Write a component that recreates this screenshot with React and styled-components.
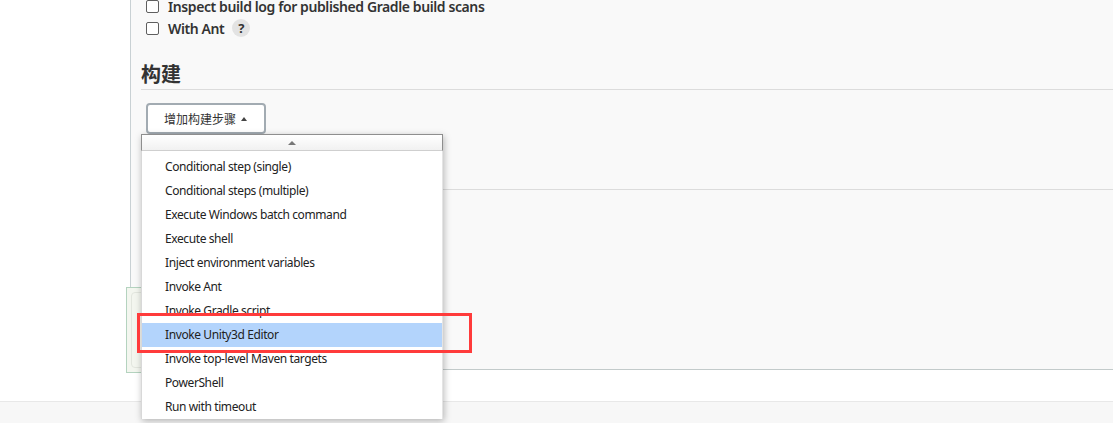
import React from "react";
import styled, { createGlobalStyle } from "styled-components";

const Global = createGlobalStyle`
  html, body { margin: 0; padding: 0; overflow: hidden; background: #fff; }
  body { font-family: "Noto Sans", "Noto Sans CJK SC", sans-serif; color: #333; }
  * { box-sizing: border-box; }
`;

const Page = styled.div`
  position: relative;
  width: 1113px;
  height: 423px;
  display: flex;
  flex-direction: column;
  overflow: hidden;
`;

const MainRow = styled.div`
  display: flex;
  height: 370px;
`;

const SideGap = styled.div`
  width: 130px;
  flex: none;
  background: #fff;
`;

const Panel = styled.div`
  flex: 1;
  display: flex;
  flex-direction: column;
  background: #f9f9f9;
  border-left: 1px solid #c9d1d4;
  border-bottom: 1px solid #c3cbcb;
`;

const FormArea = styled.div`
  flex: 1;
  padding-left: 10px;
`;

const CheckRow = styled.label`
  display: flex;
  align-items: center;
  height: 22px;
  padding-left: 5px;
  margin-top: ${(p) => (p.$first ? "-5px" : "0")};
  font-size: 14px;
  font-weight: 600;
  letter-spacing: -0.4px;
  color: #333;
  gap: 9px;
`;

const Box = styled.span`
  width: 13px;
  height: 13px;
  border: 1px solid #5f5f5f;
  border-radius: 2px;
  background: #fff;
  flex: none;
`;

const Help = styled.span`
  width: 18px;
  height: 18px;
  border-radius: 50%;
  background: #e3e3e3;
  color: #333;
  font-size: 13px;
  font-weight: 700;
  letter-spacing: 0;
  display: inline-flex;
  align-items: center;
  justify-content: center;
  margin-left: -1px;
`;

const Heading = styled.h2`
  margin: 20px 0 0;
  height: 31px;
  line-height: 32px;
  font-size: 20px;
  font-weight: 700;
  color: #333;
  border-bottom: 1px solid #dcdcdc;
`;

const ButtonWrap = styled.div`
  position: relative;
  margin: 13px 0 0 5px;
  width: 120px;
`;

const AddButton = styled.button`
  display: flex;
  align-items: center;
  gap: 5px;
  height: 31px;
  width: 120px;
  padding: 0 0 0 16px;
  border: 2px solid #a2abb2;
  border-radius: 4px;
  background: #fff;
  font-family: "Noto Sans CJK SC", sans-serif;
  font-size: 12px;
  color: #333;
`;

const Caret = styled.span`
  width: 0;
  height: 0;
  border-left: 3.5px solid transparent;
  border-right: 3.5px solid transparent;
  border-bottom: 4px solid #444;
`;

const Section = styled.div`
  margin-top: 55px;
  border-top: 1px solid #dcdcdc;
`;

const BottomBar = styled.div`
  height: 82px;
  flex: none;
`;

const SavedBox = styled.div`
  margin-left: -5px;
  width: 220px;
  height: 86px;
  border: 1px solid #b4d3bf;
  background: #f3f6ef;
  padding: 4px;
`;

const SavedInner = styled.div`
  height: 100%;
  border: 1px solid #e2e6de;
  border-radius: 4px;
`;

const WhiteGap = styled.div`
  height: 31px;
`;

const Footer = styled.div`
  flex: 1;
  background: #f7f7f7;
  border-top: 1px solid #e8e8e8;
`;

const Menu = styled.div`
  position: absolute;
  top: 31px;
  left: -5px;
  width: 302px;
  z-index: 10;
  box-shadow: 1px 2px 7px rgba(0, 0, 0, 0.28);
`;

const ScrollUp = styled.div`
  height: 17px;
  border: 1px solid #8e8e8e;
  border-bottom-color: #cfcfcf;
  background: linear-gradient(#ffffff, #f1f1f1);
  display: flex;
  align-items: center;
  justify-content: center;
`;

const SmallTri = styled.span`
  width: 0;
  height: 0;
  border-left: 4px solid transparent;
  border-right: 4px solid transparent;
  border-bottom: 4px solid #777;
`;

const List = styled.ul`
  list-style: none;
  margin: 0;
  padding: 4px 0 0;
  background: #fff;
  border-left: 1px solid #d8d8d8;
  border-right: 1px solid #e4e4e4;
`;

const Item = styled.li`
  height: 24px;
  line-height: 23px;
  padding-left: 23px;
  font-size: 12px;
  letter-spacing: -0.4px;
  color: #222;
  background: ${(p) => (p.$active ? "#b3d4fc" : "transparent")};
  white-space: nowrap;
`;

const Annotation = styled.div`
  position: absolute;
  left: 137px;
  top: 313px;
  width: 335px;
  height: 40px;
  border: 3px solid #ff3b3b;
  z-index: 20;
  pointer-events: none;
`;

const items = [
  "Conditional step (single)",
  "Conditional steps (multiple)",
  "Execute Windows batch command",
  "Execute shell",
  "Inject environment variables",
  "Invoke Ant",
  "Invoke Gradle script",
  "Invoke Unity3d Editor",
  "Invoke top-level Maven targets",
  "PowerShell",
  "Run with timeout",
];

export default function App() {
  return (
    <>
      <Global />
      <Page>
        <MainRow>
          <SideGap />
          <Panel>
            <FormArea>
              <CheckRow $first>
                <Box />
                Inspect build log for published Gradle build scans
              </CheckRow>
              <CheckRow>
                <Box />
                With Ant
                <Help>?</Help>
              </CheckRow>
              <Heading>构建</Heading>
              <ButtonWrap>
                <AddButton>
                  增加构建步骤
                  <Caret />
                </AddButton>
                <Menu>
                  <ScrollUp>
                    <SmallTri />
                  </ScrollUp>
                  <List>
                    {items.map((t) => (
                      <Item key={t} $active={t === "Invoke Unity3d Editor"}>
                        {t}
                      </Item>
                    ))}
                  </List>
                </Menu>
              </ButtonWrap>
              <Section />
            </FormArea>
            <BottomBar>
              <SavedBox>
                <SavedInner />
              </SavedBox>
            </BottomBar>
          </Panel>
        </MainRow>
        <WhiteGap />
        <Footer />
        <Annotation />
      </Page>
    </>
  );
}
